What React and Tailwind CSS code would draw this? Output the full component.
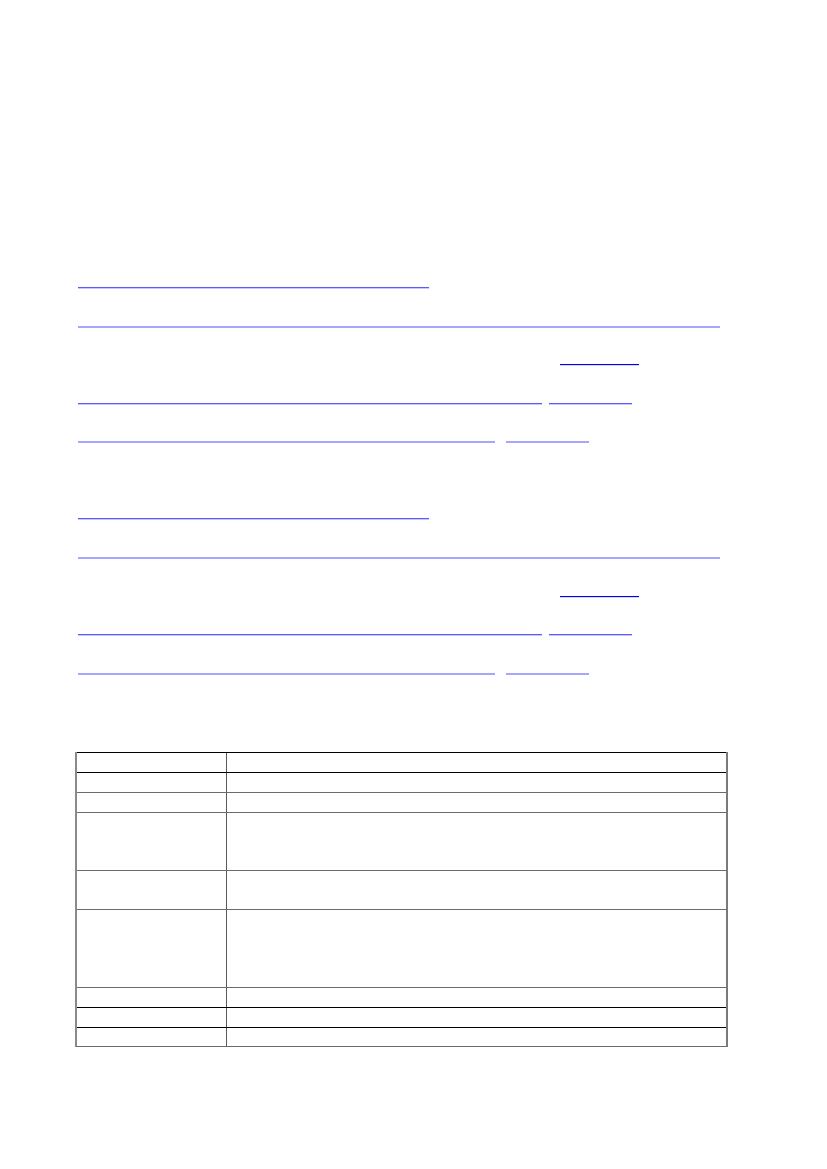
import React from 'react';

// table of contents: link text renders blank, only the underlines show
const tocRows = [
    [{ left: 78, width: 351, tone: 'mid' }],
    [{ left: 78, width: 642, tone: 'light' }],
    [{ left: 560, width: 79, tone: 'dark' }],
    [{ left: 78, width: 464, tone: 'mid' }, { left: 549, width: 83, tone: 'mid' }],
    [{ left: 78, width: 417, tone: 'light' }, { left: 506, width: 83, tone: 'light' }],
];

const tableRows = [
    { h: 'h-[20px]', top: 'border-black' },
    { h: 'h-[20px]', top: 'border-black' },
    { h: 'h-[20px]', top: 'border-[#6b6b6b]' },
    { h: 'h-[58px]', top: 'border-[#6b6b6b]' },
    { h: 'h-[39px]', top: 'border-[#6b6b6b]' },
    { h: 'h-[78px]', top: 'border-[#6b6b6b]' },
    { h: 'h-[20px]', top: 'border-[#6b6b6b]' },
    { h: 'h-[20px]', top: 'border-black' },
    { h: 'h-[19px]', top: 'border-black' },
];

function Underline({ width, tone }) {
    if (tone === 'dark') {
        return (
            <a className="block shrink-0" style={{ width }}>
                <div className="h-px bg-[#0000e6]" />
                <div className="h-px bg-[#d6d6ff]" />
            </a>
        );
    }
    if (tone === 'mid') {
        return (
            <a className="block shrink-0" style={{ width }}>
                <div className="h-px bg-[#5a5aff]" />
                <div className="h-px bg-[#c8c8ff]" />
            </a>
        );
    }
    return (
        <a className="block shrink-0" style={{ width }}>
            <div className="h-[2px] bg-[#a6a6ff]" />
        </a>
    );
}

function TocGroup() {
    return (
        <div className="flex flex-col gap-[36.6px]">
            {tocRows.map((links, i) => {
                let x = 0;
                return (
                    <div key={i} className="flex h-[2px]">
                        {links.map((l, j) => {
                            const gap = l.left - x;
                            x = l.left + l.width;
                            return (
                                <div key={j} style={{ marginLeft: gap }}>
                                    <Underline width={l.width} tone={l.tone} />
                                </div>
                            );
                        })}
                    </div>
                );
            })}
        </div>
    );
}

export default function App() {
    return (
        <div className="w-[827px] min-h-[1169px] bg-white font-['Liberation_Sans',sans-serif] text-[13px] text-black">
            <div className="pt-[287px]">
                <TocGroup />
            </div>
            <div className="pt-[75px]">
                <TocGroup />
            </div>
            <div className="pt-[77px] pl-[75px]">
                <div className="w-[653px] border-l-2 border-r-2 border-b border-l-[#8a8a8a] border-r-[#7a7a7a] border-b-[#6b6b6b]">
                    {tableRows.map((r, i) => (
                        <div key={i} className={`flex border-t ${r.top} ${r.h}`}>
                            <div className="w-[150px] border-r border-[#5a5a5a]" />
                            <div className="flex-1" />
                        </div>
                    ))}
                </div>
            </div>
        </div>
    );
}
